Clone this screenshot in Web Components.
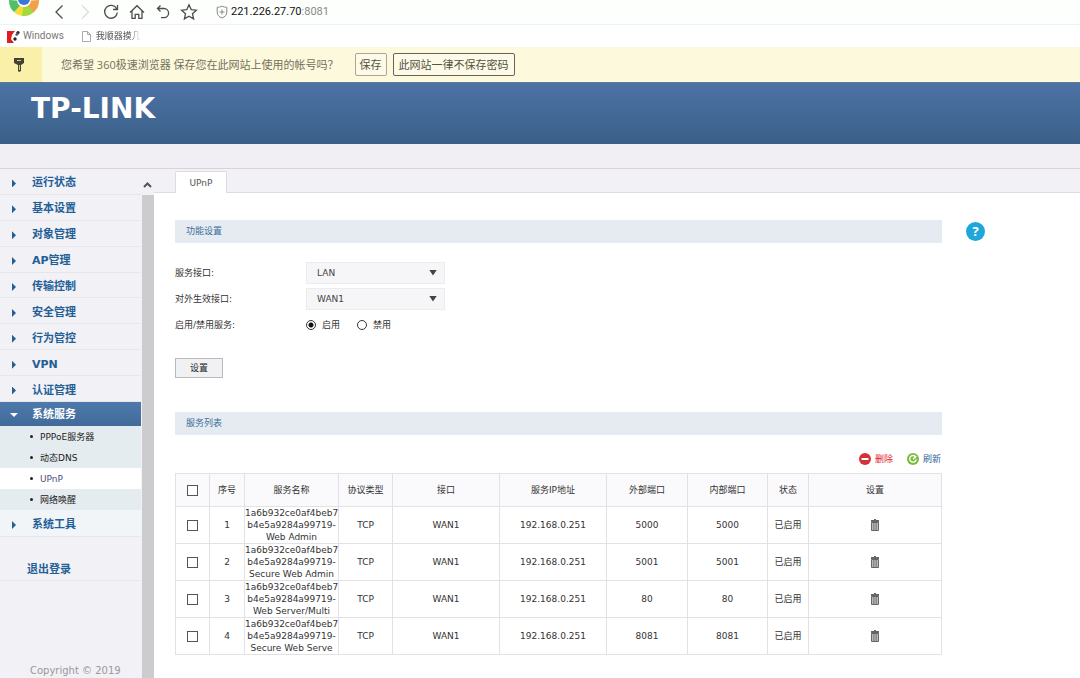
<!DOCTYPE html>
<html lang="zh-CN">
<head>
<meta charset="utf-8">
<title>TP-LINK UPnP</title>
<style>
  html, body { margin: 0; height: 100%; }
  body { font: 9px/12px "DejaVu Sans", "Noto Sans CJK SC", sans-serif; color: #333; background: #fff; }
</style>
</head>
<body>
<router-app></router-app>
<script>
const define = (name, html, setup) => {
  const template = document.createElement('template');
  template.innerHTML = '<style>*{box-sizing:border-box}</style>' + html;
  customElements.define(name, class extends HTMLElement {
    connectedCallback() {
      if (this.shadowRoot) return;
      this.attachShadow({ mode: 'open' }).append(template.content.cloneNode(true));
      if (setup) setup.call(this, this.shadowRoot);
    }
  });
};

/* Browser navigation row */
define('browser-toolbar', `
<style>
  :host { display: flex; height: 25px; align-items: center; padding-left: 8px; background: #fdfffd; border-bottom: 1px solid #f1f1f3; overflow: hidden; }
  .logo { width: 32px; height: 25px; margin-right: 8px; flex: none; }
  button { width: 22px; height: 22px; margin: 0 4px 0 0; padding: 2px; border: 0; background: none; flex: none; }
  button svg { display: block; width: 18px; height: 18px; fill: none; stroke: #4c4c4c; stroke-width: 1.3; }
  .off svg { stroke: #ddd; }
  .shield { width: 12px; height: 14px; margin: 0 3px 0 12px; fill: none; stroke: #888; flex: none; }
  .url { font: 11px/16px Roboto, sans-serif; color: #888; }
  b { font-weight: 400; color: #111; }
</style>
<svg class="logo" viewBox="0 0 32 25">
  <path d="M16 1 1 0a15 15 0 0 0 8 14z" fill="#4fbf6a"/>
  <path d="M16 1 6 12a15 15 0 0 0 12 4z" fill="#f7dc3a"/>
  <path d="M16 1 14 16a15 15 0 0 0 13-5z" fill="#a5d840"/>
  <path d="M16 1 26 12a15 15 0 0 0 5-12z" fill="#f2a04a"/>
  <circle cx="16" cy="0" r="7" fill="#fff"/><circle cx="16" cy="-1" r="6" fill="#3a78d8"/>
</svg>
<button aria-label="后退"><svg viewBox="0 0 18 18"><path d="M12.500 2.500 6 9l6.500 6.500"/></svg></button>
<button class="off" aria-label="前进"><svg viewBox="0 0 18 18"><path d="M6 2.500 12.500 9 6 15.500"/></svg></button>
<button aria-label="刷新"><svg viewBox="0 0 18 18"><path d="M14.800 6A6.400 6.400 0 1 0 15.400 9.500M15.500 2v4.500H11"/></svg></button>
<button aria-label="主页"><svg viewBox="0 0 18 18"><path d="M2 9.500 9 2.700l7 6.800M4 8v7.400h3.200v-4h3.600v4H14V8"/></svg></button>
<button aria-label="撤销"><svg viewBox="0 0 18 18"><path d="M6.500 2.500 3.500 5.500 6.500 8.500M3.500 5.500H10a4.600 4.600 0 0 1 0 9.200H7"/></svg></button>
<button aria-label="收藏"><svg viewBox="0 0 18 18"><path d="m9 1.800 2.200 4.800 5.200.6-3.900 3.500 1.100 5.200L9 13.300l-4.600 2.600 1.100-5.200L1.600 7.200l5.200-.6z"/></svg></button>
<svg class="shield" viewBox="0 0 12 14"><path d="M6 1C4.500 2 3 2.300 1.200 2.300V7c0 3 2 5 4.800 6 2.800-1 4.800-3 4.800-6V2.300C9 2.300 7.500 2 6 1zM6 4.500v5M3.500 7h5"/></svg>
<span class="url"><b>221.226.27.70</b>:8081</span>`);

/* Bookmarks row */
define('bookmark-bar', `
<style>
  :host { display: flex; height: 22px; align-items: center; padding-left: 7px; background: #fff; font: 10px/14px Roboto, "Noto Sans CJK SC", sans-serif; }
  a { display: flex; align-items: center; gap: 3px; color: #777; text-decoration: none; margin-right: 16px; }
  svg { width: 13px; height: 13px; flex: none; }
  .fade { font-size: 9px; color: #555; -webkit-mask-image: linear-gradient(90deg, #000 75%, transparent); mask-image: linear-gradient(90deg, #000 75%, transparent); }
</style>
<a href="#"><svg viewBox="0 0 13 13"><path d="M0 1h8L5 5 4 9l3 4H0z" fill="#e01b22"/><path d="M5 7c0-3 2-5 3-5l1 2-2 3 2 2-2 2c-1 0-2-2-2-4z" fill="#fff"/><circle cx="8" cy="9" r="1.700" fill="#222"/><circle cx="11" cy="2.500" r="1.600" fill="#222"/><path d="m8 5 2-3 2 2-2 2z" fill="#555"/></svg>Windows</a>
<a href="#"><svg viewBox="0 0 13 13" fill="none" stroke="#aaa"><path d="M2.500 1.500h5l3 3v7h-8zM7.500 1.500v3h3"/></svg><span class="fade">我顺器摸几</span></a>`);

/* Save-password prompt */
define('password-prompt', `
<style>
  :host { display: flex; height: 35px; align-items: center; background: #fdf9dc; color: #74705c; font: 11px/16px "Open Sans", "Noto Sans CJK SC", sans-serif; }
  .key { width: 42px; height: 35px; background: #fbf0a9; display: grid; place-items: center; padding-right: 4px; flex: none; }
  p { margin: 0 16px 0 19px; }
  button { height: 23px; margin: 0 6px 0 0; padding: 0 4px; border: 1px solid #aaa894; border-radius: 2px; background: #fdfbe8; color: #55523f; font: inherit; }
  .never { padding: 0 5px; border-color: #66645a; }
</style>
<span class="key"><svg width="12" height="16" viewBox="0 0 12 16"><path d="M1 1h10v5L8 8v6l-2 1-1-1V8L1 6z" fill="#444236"/><path d="M4 3h4v1H4zM6 8h1v5H6z" fill="#d9d09a"/></svg></span>
<p>您希望 360极速浏览器 保存您在此网站上使用的帐号吗？</p>
<button>保存</button><button class="never">此网站一律不保存密码</button>`);

/* Blue brand banner */
define('brand-header', `
<style>
  :host { display: block; }
  header { height: 62px; padding: 10px 31px; background: linear-gradient(#4c73a5, #3a5f88); border-top: 1px solid #5d7b96; color: #fff; font: bold 28px/32px "DejaVu Sans", sans-serif; }
  .band { height: 25px; background: #f1eff3; border-bottom: 1px solid #d5d4d8; }
</style>
<header><slot></slot></header><div class="band"></div>`);

/* Top-level navigation entry */
define('nav-item', `
<style>
  :host { display: block; border-bottom: 1px solid #e6e5ea; }
  a { display: flex; height: 100%; align-items: center; padding: 4px 0 0 12px; color: #235f96; font: bold 11px/14px "DejaVu Sans", "Noto Sans CJK SC", sans-serif; text-decoration: none; }
  i { width: 4px; height: 8px; margin-right: 16px; background: currentColor; clip-path: polygon(0 0, 100% 50%, 0 100%); flex: none; }
  :host([open]) { background: linear-gradient(#4d7aac, #416a99); border: 0; }
  :host([open]) a { color: #fff; padding: 2px 0 0 10px; }
  :host([open]) i { width: 8px; height: 4px; margin-right: 14px; clip-path: polygon(0 0, 100% 0, 50% 100%); }
  :host([plain]) a { padding-left: 27px; }
  :host([plain]) i { display: none; }
</style>
<a href="#"><i></i><slot></slot></a>`);

define('sub-item', `
<style>
  :host { display: block; background: #e5ecf0; }
  a { display: flex; height: 21px; align-items: center; gap: 7px; padding-left: 30px; color: #222; text-decoration: none; font-size: 9px; }
  i { width: 3px; height: 3px; border-radius: 50%; background: #222; }
  :host([current]) { background: #fff; }
  :host([current]) a { color: #4f4f80; }
</style>
<a href="#"><i></i><slot></slot></a>`);

define('side-nav', `
<style>
  :host { display: flex; flex: none; width: 154px; background: #f2f1f5; }
  nav { display: flex; flex-direction: column; flex: 1; }
  .group { display: grid; grid-auto-rows: 1fr; height: 233px; }
  .open { height: 24px; }
  .row { height: 27px; background: #f1f5f8; }
  .exit { height: 25px; margin-top: 19px; }
  footer { margin-top: auto; padding: 0 0 1px 30px; color: #999; font-size: 10px; line-height: 12px; }
  .scroll { width: 13px; display: flex; flex-direction: column; align-items: center; }
  .scroll svg { width: 9px; height: 6px; margin: 13px 0 7px; flex: none; }
  .track { flex: 1; width: 12px; background: #cccbce; }
</style>
<nav>
  <div class="group">
    <nav-item>运行状态</nav-item><nav-item>基本设置</nav-item><nav-item>对象管理</nav-item>
    <nav-item>AP管理</nav-item><nav-item>传输控制</nav-item><nav-item>安全管理</nav-item>
    <nav-item>行为管控</nav-item><nav-item>VPN</nav-item><nav-item>认证管理</nav-item>
  </div>
  <nav-item class="open" open>系统服务</nav-item>
  <sub-item>PPPoE服务器</sub-item><sub-item>动态DNS</sub-item>
  <sub-item current>UPnP</sub-item><sub-item>网络唤醒</sub-item>
  <nav-item class="row">系统工具</nav-item>
  <nav-item class="exit" plain>退出登录</nav-item>
  <footer>Copyright © 2019</footer>
</nav>
<div class="scroll"><svg viewBox="0 0 9 6"><path d="M1 5 4.500 1.500 8 5" fill="none" stroke="#555" stroke-width="2"/></svg><div class="track"></div></div>`);

define('section-title', `
<style>
  :host { display: block; }
  h2 { margin: 0; height: 23px; padding-left: 11px; background: #e5ebf0; color: #3a6f9e; font: 9px/23px "DejaVu Sans", "Noto Sans CJK SC", sans-serif; }
</style>
<h2><slot></slot></h2>`);

define('service-form', `
<style>
  :host { display: block; }
  form { display: grid; grid-template-columns: 131px 1fr; grid-template-rows: repeat(3, 23px) auto; row-gap: 3px; align-items: center; }
  .select { display: grid; width: 139px; align-items: center; }
  .select > * { grid-area: 1 / 1; }
  .select i { justify-self: end; width: 8px; height: 6px; margin-right: 8px; background: #444; clip-path: polygon(0 0, 100% 0, 50% 100%); pointer-events: none; }
  select { appearance: none; width: 100%; height: 22px; padding: 0 10px; border: 1px solid #ececef; border-radius: 0; background: #f6f5f8; color: #444; font: inherit; }
  .radios { display: flex; align-items: center; }
  .radios label { display: flex; align-items: center; gap: 6px; margin-right: 17px; }
  input { appearance: none; width: 10px; height: 10px; margin: 0; border: 1px solid #333; border-radius: 50%; background: #fff; }
  input:checked { background: radial-gradient(circle, #111 0 2px, #fff 3px); }
  button { grid-column: 1; justify-self: start; width: 48px; height: 20px; margin-top: 19px; padding: 0; border: 1px solid #b9b9bc; background: #f1f1f3; color: #222; font: inherit; }
</style>
<form>
  <label for="lan">服务接口:</label>
  <span class="select"><select id="lan"><option>LAN</option></select><i></i></span>
  <label for="wan">对外生效接口:</label>
  <span class="select"><select id="wan"><option>WAN1</option></select><i></i></span>
  <span id="state">启用/禁用服务:</span>
  <span class="radios" role="radiogroup" aria-labelledby="state">
    <label><input type="radio" name="s" checked>启用</label><label><input type="radio" name="s">禁用</label>
  </span>
  <button type="button">设置</button>
</form>`);

define('list-actions', `
<style>
  :host { display: flex; justify-content: flex-end; gap: 14px; padding-right: 1px; }
  a { display: flex; align-items: center; gap: 4px; text-decoration: none; color: #2f5f95; }
  .del { color: #e0222d; }
  svg { width: 12px; height: 12px; }
</style>
<a class="del" href="#"><svg viewBox="0 0 12 12"><circle cx="6" cy="6" r="6" fill="#d2323c"/><path d="M2.500 5h7v2h-7z" fill="#fff"/></svg>删除</a>
<a href="#"><svg viewBox="0 0 12 12"><circle cx="6" cy="6" r="6" fill="#7dba3c"/><path d="M8.500 3.700A3.300 3.300 0 1 0 9.200 6.500M9.300 3.200 6 6.300" fill="none" stroke="#fff" stroke-width="1.400"/></svg>刷新</a>`);

define('service-table', `
<style>
  :host { display: block; }
  table { width: 100%; table-layout: fixed; border-collapse: collapse; color: #333; }
  th, td { padding: 0; border: 1px solid #e3e0e6; text-align: center; font-weight: 400; height: 37px; }
  th { height: 33px; background: #faf9fb; }
  .name { white-space: nowrap; }
  input { appearance: none; display: block; width: 11px; height: 11px; margin: 0 auto; border: 1px solid #555; background: #fff; }
  button { display: block; margin: 0 auto; padding: 0; border: 0; background: none; }
  svg { display: block; width: 10px; height: 12px; }
</style>
<table>
  <colgroup><col style="width:34px"><col style="width:35px"><col style="width:94px"><col style="width:54px"><col style="width:107px"><col style="width:107px"><col style="width:81px"><col style="width:80px"><col style="width:41px"><col></colgroup>
  <thead><tr><th><input type="checkbox" aria-label="全选"></th><th>序号</th><th>服务名称</th><th>协议类型</th><th>接口</th><th>服务IP地址</th><th>外部端口</th><th>内部端口</th><th>状态</th><th>设置</th></tr></thead>
  <tbody></tbody>
</table>`, root => {
  const rows = [['Web Admin', 5000], ['Secure Web Admin', 5001], ['Web Server/Multi', 80], ['Secure Web Serve', 8081]];
  root.querySelector('tbody').innerHTML = rows.map(([name, port], i) => `<tr>
    <td><input type="checkbox" aria-label="选择 ${i + 1}"></td><td>${i + 1}</td>
    <td class="name">1a6b932ce0af4beb7<br>b4e5a9284a99719-<br>${name}</td><td>TCP</td><td>WAN1</td><td>192.168.0.251</td>
    <td>${port}</td><td>${port}</td><td>已启用</td>
    <td><button aria-label="删除"><svg viewBox="0 0 10 12"><path d="M4 0h2v1h3v2H1V1h3z" fill="#666"/><path d="M1.500 3.500h7v8h-7z" fill="#bbb" stroke="#666"/><path d="M3.500 4v7M5 4v7M6.500 4v7" stroke="#777" stroke-width=".7"/></svg></button></td></tr>`).join('');
});

define('main-panel', `
<style>
  :host { display: block; flex: 1; min-width: 0; background: #fff; }
  .tabs { display: flex; height: 24px; padding: 2px 0 0 21px; background: #f2f1f5; box-shadow: inset 0 -1px #dddce1; }
  .tabs a { width: 52px; height: 22px; border: 1px solid #dddce1; border-bottom: 0; border-radius: 2px 2px 0 0; background: #fff; color: #555; line-height: 22px; text-align: center; text-decoration: none; }
  .body { display: grid; grid-template-columns: minmax(0, 1fr) 138px; padding: 27px 0 0 21px; }
  service-form { margin: 18px 0 34px; }
  list-actions { margin: 18px 0 8px; }
  .help { width: 19px; height: 19px; margin: 2px 0 0 24px; padding: 0; border: 0; border-radius: 50%; background: #1ea7d8; color: #fff; font: bold 13px/19px "Open Sans", sans-serif; }
</style>
<div class="tabs"><a href="#">UPnP</a></div>
<div class="body">
  <main>
    <section-title>功能设置</section-title>
    <service-form></service-form>
    <section-title>服务列表</section-title>
    <list-actions></list-actions>
    <service-table></service-table>
  </main>
  <button class="help" aria-label="帮助">?</button>
</div>`);

define('router-app', `
<style>
  :host { display: flex; flex-direction: column; min-height: 100vh; }
  .page { display: flex; flex: 1; }
</style>
<browser-toolbar></browser-toolbar>
<bookmark-bar></bookmark-bar>
<password-prompt></password-prompt>
<brand-header>TP-LINK</brand-header>
<div class="page"><side-nav></side-nav><main-panel></main-panel></div>`);
</script>
</body>
</html>
